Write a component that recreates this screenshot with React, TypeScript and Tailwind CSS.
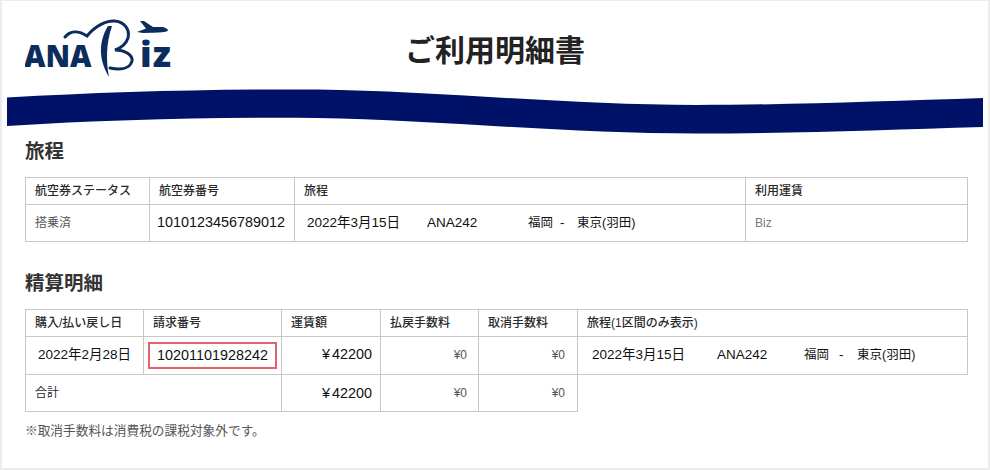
const jp = "font-['Liberation_Sans','Noto_Sans_CJK_JP',sans-serif]";

function Logo() {
  return (
    <svg width="152" height="64" viewBox="0 0 152 64" className="block" aria-label="ANA Biz">
      <text x="-1" y="49.5" fontFamily="'Open Sans', 'Liberation Sans', sans-serif" fontWeight="800" fontSize="29.5" fill="#0b2c5c">ANA</text>
      <text x="115" y="49.5" fontFamily="'Open Sans', 'Liberation Sans', sans-serif" fontWeight="800" fontSize="36" letterSpacing="1" fill="#0b2c5c">iz</text>
      {/* cloud arc running into the B */}
      <path d="M40 20 C45 14 53 13 62 19 C70 9 82 3 90 4 C100 5 105 13 103 21 C101 27 96 31 90 33 C100 33 108 38 107 44 C105 52 95 53 85 51" fill="none" stroke="#0b2c5c" strokeWidth="3" strokeLinecap="round" />
      <path d="M83 9 C75 22 72 40 84 60 C81 44 81 26 87 9 Z" fill="#0b2c5c" />
      {/* plane */}
      <path d="M115 4 L119 4 L128 10 L136 10 C140 10 143 12 143 13.5 C141 15.5 134 15.5 127 15.8 L118 16 L112 15 L121 11.5 Z" fill="#0b2c5c" />
    </svg>
  );
}

function Wave() {
  return (
    <svg width="976" height="46" viewBox="0 0 976 46" className="block" preserveAspectRatio="none">
      <path
        d="M0 9.5 C100 4 200 1 310 1.5 C430 3 560 17 690 17 C780 17 880 13 976 10 L976 39 C880 42 780 45.5 690 45.5 C560 45.5 430 32 310 30 C200 29 100 32 0 38 Z"
        fill="#001268"
      />
    </svg>
  );
}

const th = "border border-[#c8c8c8] px-[9px] text-left align-middle text-[12px] font-medium text-[#2a2a2a]";
const td = "border border-[#c8c8c8] align-middle text-[13.5px] text-[#111]";
const fee = "border border-[#c8c8c8] text-right align-middle text-[12px] text-[#555]";
const fare = "border border-[#c8c8c8] pr-[8px] text-right align-middle text-[14.4px] text-[#111]";

export default function App() {
  return (
    <div className={`${jp} h-[470px] w-[990px] overflow-hidden border-t border-b-2 border-l-2 border-r-2 border-[#ececec] bg-white`}>
      <div className="flex h-[87px] items-start">
        <div className="ml-[23px] mt-[16px] w-[152px]">
          <Logo />
        </div>
        <h1 className="ml-[228px] mt-[31px] text-[30px] leading-[38px] font-bold text-[#222]">ご利用明細書</h1>
      </div>
      <div className="ml-[5px] h-[46px]">
        <Wave />
      </div>
      <div className="px-[23px]">
        <h2 className="mt-[3px] text-[19.5px] leading-[28px] font-bold text-[#333]">旅程</h2>
        <table className="mt-[12px] h-[64px] w-[942px] table-fixed border-collapse">
          <colgroup>
            <col className="w-[124px]" />
            <col className="w-[145px]" />
            <col className="w-[451px]" />
            <col className="w-[222px]" />
          </colgroup>
          <tbody>
            <tr className="h-[27px]">
              <th className={th}>航空券ステータス</th>
              <th className={th}>航空券番号</th>
              <th className={th}>旅程</th>
              <th className={th}>利用運賃</th>
            </tr>
            <tr className="h-[37px]">
              <td className={`${td} px-[9px] !text-[12px] !text-[#555]`}>搭乗済</td>
              <td className={`${td} px-[7px] !text-[14.4px] whitespace-nowrap`}>1010123456789012</td>
              <td className={`${td} pl-[12px]`}>
                <div className="flex items-center whitespace-nowrap">
                  <span className="w-[120px]">2022年3月15日</span>
                  <span className="w-[101px]">ANA242</span>
                  <span className="w-[32px] text-[12.5px]">福岡</span>
                  <span className="w-[17px]">-</span>
                  <span className="text-[12.5px]">東京(羽田)</span>
                </div>
              </td>
              <td className={`${td} px-[9px] !text-[12px] !text-[#777]`}>Biz</td>
            </tr>
          </tbody>
        </table>

        <h2 className="mt-[27px] text-[19.5px] leading-[28px] font-bold text-[#333]">精算明細</h2>
        <table className="mt-[12px] w-[942px] table-fixed border-collapse">
          <colgroup>
            <col className="w-[118px]" />
            <col className="w-[138px]" />
            <col className="w-[99px]" />
            <col className="w-[98px]" />
            <col className="w-[99px]" />
            <col className="w-[390px]" />
          </colgroup>
          <tbody>
            <tr className="h-[27px]">
              <th className={th}>購入/払い戻し日</th>
              <th className={th}>請求番号</th>
              <th className={th}>運賃額</th>
              <th className={th}>払戻手数料</th>
              <th className={th}>取消手数料</th>
              <th className={th}>旅程(1区間のみ表示)</th>
            </tr>
            <tr className="h-[38px]">
              <td className={`${td} text-center whitespace-nowrap`}>2022年2月28日</td>
              <td className={`${td} px-[4px]`}>
                <div className="flex h-[27px] items-center justify-center border-2 border-[#e2646a] text-[14.4px] leading-none">10201101928242</div>
              </td>
              <td className={`${fare} pb-[2px]`}><span className="mr-[2px]">¥</span>42200</td>
              <td className={`${fee} pr-[11px] pb-[2px]`}>¥0</td>
              <td className={`${fee} pr-[12px] pb-[2px]`}>¥0</td>
              <td className={`${td} pl-[14px]`}>
                <div className="flex items-center whitespace-nowrap">
                  <span className="w-[125px]">2022年3月15日</span>
                  <span className="w-[87px]">ANA242</span>
                  <span className="w-[35px] text-[12.5px]">福岡</span>
                  <span className="w-[18px]">-</span>
                  <span className="text-[12.5px]">東京(羽田)</span>
                </div>
              </td>
            </tr>
            <tr className="h-[37px]">
              <td colSpan={2} className={`${td} px-[9px] !text-[12px] !text-[#2a2a2a]`}>合計</td>
              <td className={`${fare} pt-[2px]`}><span className="mr-[2px]">¥</span>42200</td>
              <td className={`${fee} pr-[11px]`}>¥0</td>
              <td className={`${fee} pr-[12px]`}>¥0</td>
            </tr>
          </tbody>
        </table>
        <p className="mt-[10px] text-[12.7px] leading-[18px] text-[#555]">※取消手数料は消費税の課税対象外です。</p>
      </div>
    </div>
  );
}
